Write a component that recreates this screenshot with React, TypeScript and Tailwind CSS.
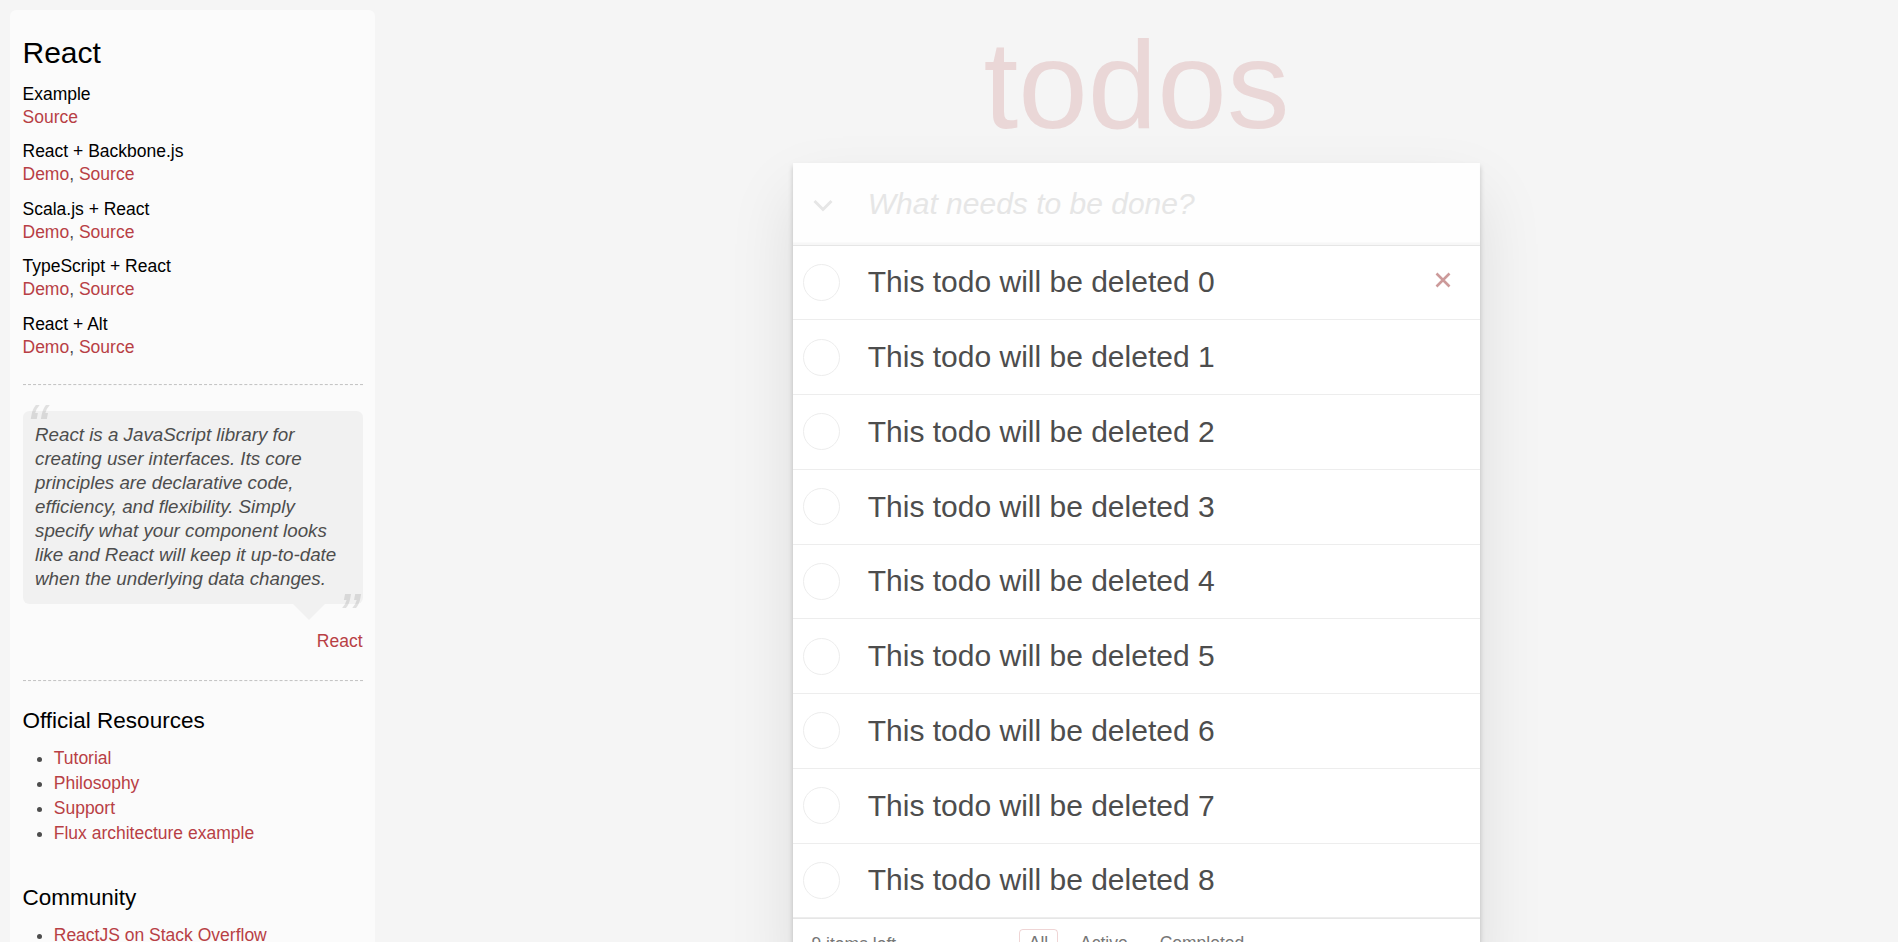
import React from "react";

const examples = [
  { name: "Example", links: ["Source"] },
  { name: "React + Backbone.js", links: ["Demo", "Source"] },
  { name: "Scala.js + React", links: ["Demo", "Source"] },
  { name: "TypeScript + React", links: ["Demo", "Source"] },
  { name: "React + Alt", links: ["Demo", "Source"] },
];

const resources = ["Tutorial", "Philosophy", "Support", "Flux architecture example"];
const community = ["ReactJS on Stack Overflow", "Google Groups Mailing List", "IRC"];

const todos = Array.from({ length: 9 }, (_, i) => `This todo will be deleted ${i}`);

function Dashed({ className = "" }: { className?: string }) {
  return <hr className={`border-0 border-t border-b border-dashed border-t-[#c5c5c5] border-b-[#f7f7f7] ${className}`} />;
}

function Learn() {
  return (
    <aside className="ml-[10px] mt-[10px] w-[365px] shrink-0 rounded-[6.25px] bg-white/60 p-[12.5px] pb-[40px]">
      <h3 className="mt-[12.5px] text-[30px] leading-[36px] font-medium text-black">React</h3>
      {examples.map((ex) => (
        <div key={ex.name} className="mt-[12.5px]">
          <h5 className="text-[17.5px] leading-[21px] font-medium text-black">{ex.name}</h5>
          <div className="leading-[24px]">
            {ex.links.map((l, i) => (
              <span key={l}>
                {i > 0 && ", "}
                <a className="text-[#b83f45]">{l}</a>
              </span>
            ))}
          </div>
        </div>
      ))}

      <Dashed className="mt-[25px]" />

      <blockquote className="mt-[25px]">
        <div className="relative rounded-[6.25px] bg-black/[0.04] p-[12.5px]">
          <span className="absolute left-[3.75px] top-[-25px] text-[62.5px] leading-[1.3] italic opacity-15">“</span>
          <p className="text-[18.75px] leading-[24px] font-light italic">
            React is a JavaScript library for creating user interfaces. Its core principles are declarative code,
            efficiency, and flexibility. Simply specify what your component looks like and React will keep it
            up-to-date when the underlying data changes.
          </p>
          <span className="absolute right-[3.75px] bottom-[-52.5px] text-[62.5px] leading-[1.3] italic opacity-15">”</span>
        </div>
        <div className="flex justify-end pr-[37.5px]">
          <div className="h-0 w-0 border-x-[16.25px] border-t-[16.25px] border-x-transparent border-t-black/[0.04]" />
        </div>
        <footer className="mt-[9.75px] text-right leading-[24.5px]">
          <a className="text-[#b83f45]">React</a>
        </footer>
      </blockquote>

      <Dashed className="mt-[26px]" />

      <h4 className="mt-[25px] text-[22.5px] leading-[27px] font-medium text-black">Official Resources</h4>
      <ul className="mt-[12.5px] mb-[37.5px] ml-[31.25px] list-disc">
        {resources.map((r) => (
          <li key={r} className="leading-[25px]">
            <a className="text-[#b83f45]">{r}</a>
          </li>
        ))}
      </ul>

      <h4 className="text-[22.5px] leading-[27px] font-medium text-black">Community</h4>
      <ul className="mt-[12.5px] ml-[31.25px] list-disc">
        {community.map((r) => (
          <li key={r} className="leading-[25px]">
            <a className="text-[#b83f45]">{r}</a>
          </li>
        ))}
      </ul>
    </aside>
  );
}

function TodoRow({ text, hovered }: { text: string; hovered?: boolean }) {
  return (
    <li className="flex h-[74.75px] items-center border-b border-[#ededed]">
      <div className="ml-[10px] h-[37px] w-[37px] shrink-0 rounded-full border border-[#ededed]" />
      <label className="ml-[28px] flex-1 text-[30px] leading-[36px] font-normal text-[#4d4d4d]">{text}</label>
      {hovered && (
        <button className="mr-[12.5px] mb-[5px] flex h-[50px] w-[50px] items-center justify-center">
          <svg width="16" height="16" viewBox="0 0 16 16">
            <path d="M1.5 1.5 L14.5 14.5 M14.5 1.5 L1.5 14.5" stroke="#cc9a9a" strokeWidth="2.6" />
          </svg>
        </button>
      )}
    </li>
  );
}

function TodoApp() {
  return (
    <div className="w-[687.5px]">
      <h1 className="mt-[22px] mb-[15.5px] h-[125px] text-center text-[125px] leading-[125px] font-thin text-[rgba(175,47,47,0.15)]">
        todos
      </h1>
      <section className="bg-white shadow-[0_2.5px_5px_0_rgba(0,0,0,0.2),0_31.25px_62.5px_0_rgba(0,0,0,0.1)]">
        <header className="flex h-[82px] items-center bg-[rgba(0,0,0,0.003)] shadow-[inset_0_-2.5px_1.25px_rgba(0,0,0,0.03)]">
          <div className="flex w-[75px] shrink-0 justify-start pl-[20px] pt-[4px]">
            <svg width="20" height="13" viewBox="0 0 20 13">
              <path d="M1.5 2 L10 10.5 L18.5 2" fill="none" stroke="#e6e6e6" strokeWidth="3" />
            </svg>
          </div>
          <input
            className="min-w-0 flex-1 bg-transparent pr-[20px] text-[30px] leading-[42px] font-light text-[#4d4d4d] outline-none placeholder:italic placeholder:font-light placeholder:text-[#e6e6e6]"
            placeholder="What needs to be done?"
          />
        </header>
        <main className="border-t border-[#e6e6e6]">
          <ul>
            {todos.map((t, i) => (
              <TodoRow key={t} text={t} hovered={i === 0} />
            ))}
          </ul>
        </main>
        <footer className="grid h-[50px] grid-cols-[1fr_auto_1fr] border-t border-[#e6e6e6] px-[18.75px] py-[12.5px] text-[17.5px] leading-[24.5px] text-[#777]">
          <span>
            <strong className="font-light">9</strong> items left
          </span>
          <ul className="-mt-[2.5px] flex items-start gap-[4.9px]">
            <li>
              <a className="mx-[3.75px] block rounded-[3.75px] border border-[rgba(175,47,47,0.2)] px-[8.75px] py-[3.75px] leading-[19.5px]">
                All
              </a>
            </li>
            <li>
              <a className="mx-[3.75px] block rounded-[3.75px] border border-transparent px-[8.75px] py-[3.75px] leading-[19.5px]">
                Active
              </a>
            </li>
            <li>
              <a className="mx-[3.75px] block rounded-[3.75px] border border-transparent px-[8.75px] py-[3.75px] leading-[19.5px]">
                Completed
              </a>
            </li>
          </ul>
          <span />
        </footer>
      </section>
      <div className="mt-[50px] pb-[40px] text-center text-[12.5px] leading-[1] text-[#bfbfbf]">
        <p>Double-click to edit a todo</p>
        <p className="mt-[11px]">Created by petehunt</p>
        <p className="mt-[11px]">Part of TodoMVC</p>
      </div>
    </div>
  );
}

export default function App() {
  return (
    <div className="flex min-h-screen items-start bg-[#f5f5f5] font-['Liberation_Sans',Arial,sans-serif] text-[17.5px] leading-[24.5px] font-light text-[#4d4d4d]">
      <Learn />
      <div className="flex flex-1 justify-center">
        <TodoApp />
      </div>
    </div>
  );
}
